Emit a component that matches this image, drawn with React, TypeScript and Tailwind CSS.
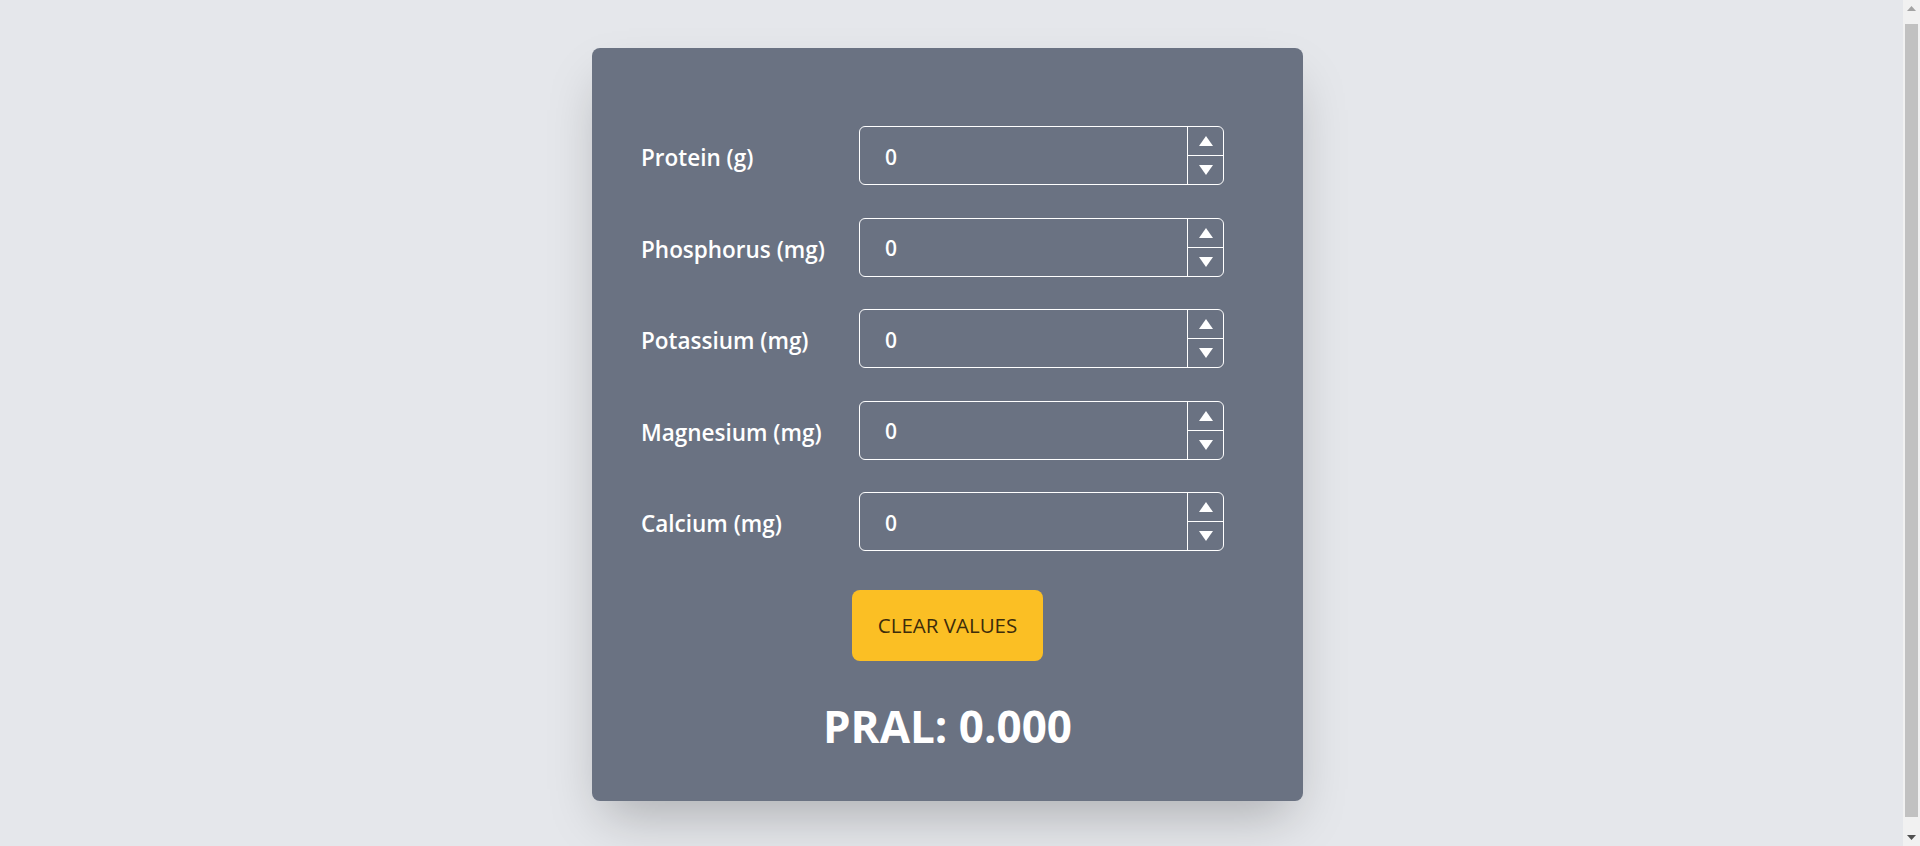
import React, { useState } from 'react';

const fields = [
  { key: 'protein', label: 'Protein (g)' },
  { key: 'phosphorus', label: 'Phosphorus (mg)' },
  { key: 'potassium', label: 'Potassium (mg)' },
  { key: 'magnesium', label: 'Magnesium (mg)' },
  { key: 'calcium', label: 'Calcium (mg)' },
];

type Values = Record<string, number>;

const emptyValues: Values = { protein: 0, phosphorus: 0, potassium: 0, magnesium: 0, calcium: 0 };

const NumberField: React.FC<{ value: number; onChange: (v: number) => void }> = ({ value, onChange }) => {
  return (
    <div className="flex h-[59px] w-[365px] shrink-0 rounded-md border border-white">
      <input
        type="text"
        value={value}
        onChange={(e) => onChange(Number(e.target.value) || 0)}
        className="min-w-0 flex-1 bg-transparent pl-[25px] pt-[4px] text-[21px] font-semibold text-white outline-none"
      />
      <div className="flex w-[36px] flex-col border-l border-white">
        <button
          type="button"
          onClick={() => onChange(value + 1)}
          className="flex flex-1 items-center justify-center border-b border-white"
        >
          <svg width="14" height="10" viewBox="0 0 14 10">
            <path d="M7 0 L14 10 L0 10 Z" fill="white" />
          </svg>
        </button>
        <button
          type="button"
          onClick={() => onChange(Math.max(0, value - 1))}
          className="flex flex-1 items-center justify-center"
        >
          <svg width="14" height="10" viewBox="0 0 14 10">
            <path d="M0 0 L14 0 L7 10 Z" fill="white" />
          </svg>
        </button>
      </div>
    </div>
  );
};

// fake browser scrollbar, as in the screenshot
const Scrollbar: React.FC = () => (
  <div className="flex h-full w-[17px] shrink-0 flex-col bg-[#f1f1f1]">
    <div className="flex h-[17px] items-center justify-center">
      <svg width="9" height="5" viewBox="0 0 9 5">
        <path d="M4.5 0 L9 5 L0 5 Z" fill="#a3a3a3" />
      </svg>
    </div>
    <div className="mx-[2px] mb-[12px] mt-[7px] flex-1 bg-[#c1c1c1]" />
    <div className="flex h-[17px] items-center justify-center">
      <svg width="9" height="5" viewBox="0 0 9 5">
        <path d="M0 0 L9 0 L4.5 5 Z" fill="#505050" />
      </svg>
    </div>
  </div>
);

const App: React.FC = () => {
  const [values, setValues] = useState<Values>(emptyValues);

  // PRAL = 0.49*protein + 0.037*phosphorus - 0.021*potassium - 0.026*magnesium - 0.013*calcium
  const pral =
    0.49 * values.protein +
    0.037 * values.phosphorus -
    0.021 * values.potassium -
    0.026 * values.magnesium -
    0.013 * values.calcium;

  return (
    <div
      className="flex h-screen overflow-hidden bg-gray-200"
      style={{ fontFamily: '"Open Sans", "Noto Sans", sans-serif' }}
    >
      <div className="flex flex-1 justify-center pr-2 pt-[48px]">
        <div className="flex h-fit w-[711px] flex-col rounded-lg bg-gray-500 pb-[47px] pl-[49px] pr-[79px] pt-[78px] shadow-2xl">
          <div className="flex flex-col gap-[32.5px]">
            {fields.map((f) => (
              <div key={f.key} className="flex items-center">
                <label className="w-[218px] pt-[5px] text-[22.5px] font-semibold text-white">{f.label}</label>
                <NumberField
                  value={values[f.key]}
                  onChange={(v) => setValues({ ...values, [f.key]: v })}
                />
              </div>
            ))}
          </div>

          <div className="mt-[39px] flex justify-center pl-[30px]">
            <button
              type="button"
              onClick={() => setValues(emptyValues)}
              className="h-[71px] w-[191px] rounded-lg bg-[#fbbf24] text-[20.5px] uppercase text-[#3d2c0b]"
            >
              Clear Values
            </button>
          </div>

          <div className="mt-[37px] pl-[30px] text-center text-[44px] font-bold leading-[56px] text-white">
            PRAL: {pral.toFixed(3)}
          </div>
        </div>
      </div>
      <Scrollbar />
    </div>
  );
};

export default App;
